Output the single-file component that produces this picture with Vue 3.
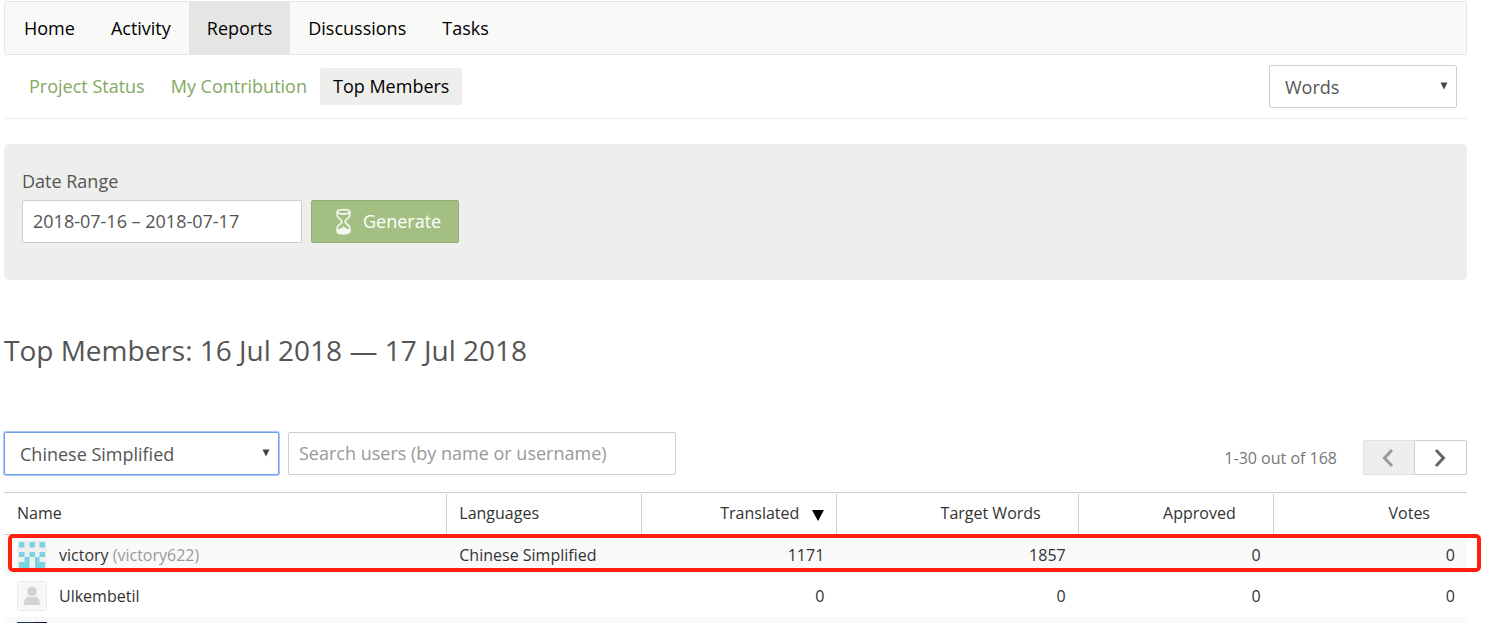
<!--
  Project reports: top members for the selected date range and language.
-->
<script setup>
import { ref } from 'vue'

const navItems = ['Home', 'Activity', 'Reports', 'Discussions', 'Tasks']
const reportTabs = ['Project Status', 'My Contribution', 'Top Members']
const activeNav = ref('Reports')
const activeTab = ref('Top Members')

const unit = ref('Words')
const language = ref('Chinese Simplified')
const dateRange = ref('2018-07-16 – 2018-07-17')
const search = ref('')

const columns = [
  { key: 'name', label: 'Name' },
  { key: 'languages', label: 'Languages' },
  { key: 'translated', label: 'Translated', numeric: true, sorted: true },
  { key: 'target', label: 'Target Words', numeric: true },
  { key: 'approved', label: 'Approved', numeric: true },
  { key: 'votes', label: 'Votes', numeric: true },
]

const members = [
  { name: 'victory', username: 'victory622', avatar: 'pattern', languages: 'Chinese Simplified', translated: 1171, target: 1857, approved: 0, votes: 0, marked: true },
  { name: 'Ulkembetil', avatar: 'person', languages: '', translated: 0, target: 0, approved: 0, votes: 0 },
  { avatar: 'photo' },
]
</script>

<template>
  <div class="page">
    <nav class="nav">
      <a
        v-for="item in navItems"
        :key="item"
        href="#"
        class="nav__item"
        :class="{ 'nav__item--active': item === activeNav }"
        @click.prevent="activeNav = item"
      >{{ item }}</a>
    </nav>

    <div class="subnav">
      <div class="subnav__tabs">
        <a
          v-for="tab in reportTabs"
          :key="tab"
          href="#"
          class="subnav__item"
          :class="{ 'subnav__item--active': tab === activeTab }"
          @click.prevent="activeTab = tab"
        >{{ tab }}</a>
      </div>
      <div class="select select--unit">
        <select v-model="unit" class="field" aria-label="Unit">
          <option>Words</option>
          <option>Strings</option>
        </select>
        <svg class="select__arrow" viewBox="0 0 8 8"><path d="M0.5 0.5h7L4 7.5z" /></svg>
      </div>
    </div>

    <form class="filter" @submit.prevent>
      <label class="filter__label" for="date-range">Date Range</label>
      <div class="filter__row">
        <input id="date-range" v-model="dateRange" class="field filter__date" type="text" />
        <button class="generate" type="submit">
          <svg class="generate__icon" viewBox="0 0 17 27">
            <ellipse cx="8.5" cy="3.8" rx="6.3" ry="2.2" />
            <path d="M2.2 3.8v3.400c0 3.200 4.600 4 4.600 6.500s-4.600 3.300-4.600 6.300v3.500c0 3 12.600 3 12.600 0V20c0-3-4.600-3.800-4.600-6.300s4.600-3.300 4.600-6.500V3.800" />
            <path class="generate__sand" d="M2.300 21.500c3-.5 5-1.500 6.200-3.500 1.200 2 3.200 3 6.200 3.500v2.500c-2 2.200-10.400 2.200-12.400 0z" />
          </svg>
          Generate
        </button>
      </div>
    </form>

    <h1 class="title">Top Members: 16 Jul 2018 — 17 Jul 2018</h1>

    <div class="toolbar">
      <div class="select select--language">
        <select v-model="language" class="field field--focus" aria-label="Language">
          <option>Chinese Simplified</option>
          <option>All Languages</option>
        </select>
        <svg class="select__arrow" viewBox="0 0 8 8"><path d="M0.5 0.5h7L4 7.5z" /></svg>
      </div>
      <input
        v-model="search"
        class="field toolbar__search"
        type="text"
        placeholder="Search users (by name or username)"
        aria-label="Search users"
      />
      <div class="pager">
        <span class="pager__text">1-30 out of 168</span>
        <div class="pager__buttons">
          <button class="pager__btn" type="button" disabled aria-label="Previous page">
            <svg viewBox="0 0 12 20"><path d="M10 2L2.500 10l7.500 8" /></svg>
          </button>
          <button class="pager__btn" type="button" aria-label="Next page">
            <svg viewBox="0 0 12 20"><path d="M2 2l7.500 8L2 18" /></svg>
          </button>
        </div>
      </div>
    </div>

    <table class="members">
      <colgroup>
        <col v-for="col in columns" :key="col.key" :class="`col-${col.key}`" />
      </colgroup>
      <thead>
        <tr>
          <th v-for="col in columns" :key="col.key" scope="col">
            <div class="head" :class="{ 'head--numeric': col.numeric, 'head--sorted': col.sorted }">
              {{ col.label }}
              <svg v-if="col.sorted" class="head__sort" viewBox="0 0 12 11"><path d="M0 0h12L6 11z" /></svg>
            </div>
          </th>
        </tr>
      </thead>
      <tbody>
        <tr v-for="(member, index) in members" :key="index">
          <td>
            <div class="member">
              <svg v-if="member.avatar === 'pattern'" class="avatar" viewBox="0 0 30 30">
                <rect width="30" height="30" fill="#efefef" />
                <path fill="#77d4e0" d="M2 2h5.500v5.500H2zM12.500 2H18v5.500h-5.500zM22.500 2H28v5.500h-5.500zM2 12h5.500v5H2zM12.500 12H18v5h-5.500zM22.500 12H28v5h-5.500zM7.500 17h5v11H2v-6h5.500zM18 17h4.500v5H28v6H18z" />
              </svg>
              <svg v-else-if="member.avatar === 'person'" class="avatar" viewBox="0 0 30 30">
                <rect x="0.5" y="0.5" width="29" height="29" rx="2" fill="#f7f7f7" stroke="#ebebeb" />
                <circle cx="15" cy="10.500" r="4.800" fill="#d2d2d2" />
                <path fill="#d2d2d2" d="M6.500 24c.5-5 3-8 5.500-8.500 2 1.300 4 1.300 6 0 2.500.5 5 3.500 5.500 8.500z" />
              </svg>
              <svg v-else class="avatar avatar--square" viewBox="0 0 30 30">
                <rect width="30" height="30" fill="#15103a" />
                <rect width="17" height="30" fill="#1d3560" />
              </svg>
              <span v-if="member.name">
                {{ member.name }}
                <span v-if="member.username" class="member__username">({{ member.username }})</span>
              </span>
            </div>
            <span v-if="member.marked" class="marker"></span>
          </td>
          <td>{{ member.languages }}</td>
          <td class="num">{{ member.translated }}</td>
          <td class="num">{{ member.target }}</td>
          <td class="num">{{ member.approved }}</td>
          <td class="num">{{ member.votes }}</td>
        </tr>
      </tbody>
    </table>
  </div>
</template>

<style>
body {
  margin: 0;
  background: #fff;
}
</style>

<style scoped>
.page {
  box-sizing: border-box;
  height: 100vh;
  padding: 1px 21px 0 4px;
  overflow: hidden;
  font-family: 'Open Sans', 'Noto Sans', sans-serif;
  font-size: 18px;
  line-height: 24px;
  color: #555;
}
.page *,
.page *::before {
  box-sizing: border-box;
}

.nav {
  display: flex;
  padding-left: 1px;
  border: 1px solid #e5e5e3;
  border-radius: 2px;
  background: #f9f9f7;
}
.nav__item {
  padding: 14px 18px;
  color: #000;
  text-decoration: none;
}
.nav__item--active {
  background: #e5e5e3;
}

.subnav {
  display: flex;
  justify-content: space-between;
  align-items: center;
  padding: 10px 10px 10px 12px;
  border-bottom: 1px solid #ecece4;
}
.subnav__tabs {
  display: flex;
}
.subnav__item {
  padding: 6px 13px 7px;
  border-radius: 2px;
  color: #83a962;
  text-decoration: none;
}
.subnav__item--active {
  background: #eeeeec;
  color: #000;
}

.field {
  width: 100%;
  height: 43px;
  margin: 0;
  padding: 0 10px 2px;
  border: 1px solid #cfcfca;
  border-radius: 2px;
  outline: none;
  background: #fff;
  font: inherit;
  color: #555;
}
.field::placeholder {
  color: #999;
  opacity: 1;
}
.field--focus {
  border-color: #6ea3f0;
  box-shadow: 0 0 0 1px #a9c8f5;
}
.select {
  position: relative;
}
.select .field {
  display: block;
  padding: 0 30px 0 15px;
  appearance: none;
}
.select--unit {
  width: 188px;
}
.select--language {
  width: 275px;
}
.select__arrow {
  position: absolute;
  top: 17px;
  right: 9px;
  width: 8px;
  height: 8px;
  fill: #444;
  pointer-events: none;
}

.filter {
  margin-top: 25px;
  padding: 25px 18px 37px;
  border-radius: 5px;
  background: #eeeeec;
}
.filter__label {
  display: block;
  margin-bottom: 7px;
}
.filter__row {
  display: flex;
  gap: 9px;
}
.filter__date {
  width: 280px;
}
.generate {
  display: flex;
  align-items: center;
  gap: 11px;
  height: 43px;
  padding: 0 17px 2px 23px;
  border: 1px solid #93ad78;
  border-radius: 2px;
  background: #a3bf82;
  font: inherit;
  color: #fff;
}
.generate__icon {
  width: 17px;
  height: 27px;
  margin-top: 2px;
  fill: none;
  stroke: #f0f4e9;
  stroke-width: 1.8;
}
.generate__icon .generate__sand {
  fill: #f4f7ef;
  stroke: none;
}

.title {
  margin: 50px 0 62px;
  font-size: 28px;
  font-weight: 400;
  line-height: 40px;
}

.toolbar {
  display: flex;
  align-items: flex-start;
  gap: 9px;
}
.toolbar__search {
  width: 388px;
}
.pager {
  display: flex;
  align-items: center;
  gap: 26px;
  margin: 8px 0 0 auto;
}
.pager__text {
  font-size: 16px;
  color: #777;
}
.pager__buttons {
  display: flex;
}
.pager__btn {
  display: flex;
  align-items: center;
  justify-content: center;
  width: 53px;
  height: 35px;
  padding: 0 2px 0 0;
  border: 1px solid #cfcfca;
  border-radius: 0 2px 2px 0;
  background: #fff;
}
.pager__btn svg {
  width: 12px;
  height: 20px;
  fill: none;
  stroke: #666;
  stroke-width: 3;
}
.pager__btn:disabled {
  width: 51px;
  border-color: #e0e0de;
  border-right: 0;
  border-radius: 2px 0 0 2px;
  background: #eeeeec;
}
.pager__btn:disabled svg {
  stroke: #999;
}

.members {
  width: 100%;
  margin-top: 17px;
  border-top: 1px solid #cfcfca;
  border-spacing: 0;
  table-layout: fixed;
  font-size: 16px;
  color: #333;
}
.col-name {
  width: 30.3%;
}
.col-languages,
.col-translated,
.col-approved {
  width: 13.33%;
}
.col-target {
  width: 16.5%;
}
.members th {
  padding: 1px 0 0;
  border-bottom: 1px solid #cfcfca;
  font-weight: 400;
  text-align: left;
}
.head {
  display: flex;
  align-items: center;
  height: 40px;
  padding: 0 12px 2px;
  border-right: 1px solid #cfcfca;
}
.members th:first-child .head {
  padding-left: 13px;
}
.members th:last-child .head {
  border-right: 0;
}
.head--numeric {
  justify-content: flex-end;
  padding-right: 37px;
}
.head--sorted {
  gap: 13px;
  padding-right: 12px;
}
.head__sort {
  width: 12px;
  height: 11px;
  margin-top: 5px;
  fill: #000;
}
.members tbody tr {
  position: relative;
}
.members tbody tr:nth-child(odd) {
  background: #f9f9f9;
}
.members td {
  height: 41px;
  padding: 0 13px 2px 12px;
}
.members td:first-child {
  padding-left: 13px;
}
.members td:last-child {
  padding-right: 12px;
}
.num {
  text-align: right;
}
.member {
  display: flex;
  align-items: center;
  gap: 12px;
}
.avatar {
  width: 30px;
  height: 30px;
  border-radius: 2px;
}
.avatar--square {
  border-radius: 0;
}
.member__username {
  color: #999;
}

/* Outline around the highlighted member, drawn over the row */
.marker {
  position: absolute;
  top: -1px;
  right: -14px;
  bottom: 4px;
  left: 4px;
  border: 4px solid #ff1f10;
  border-radius: 5px;
  pointer-events: none;
}
</style>
